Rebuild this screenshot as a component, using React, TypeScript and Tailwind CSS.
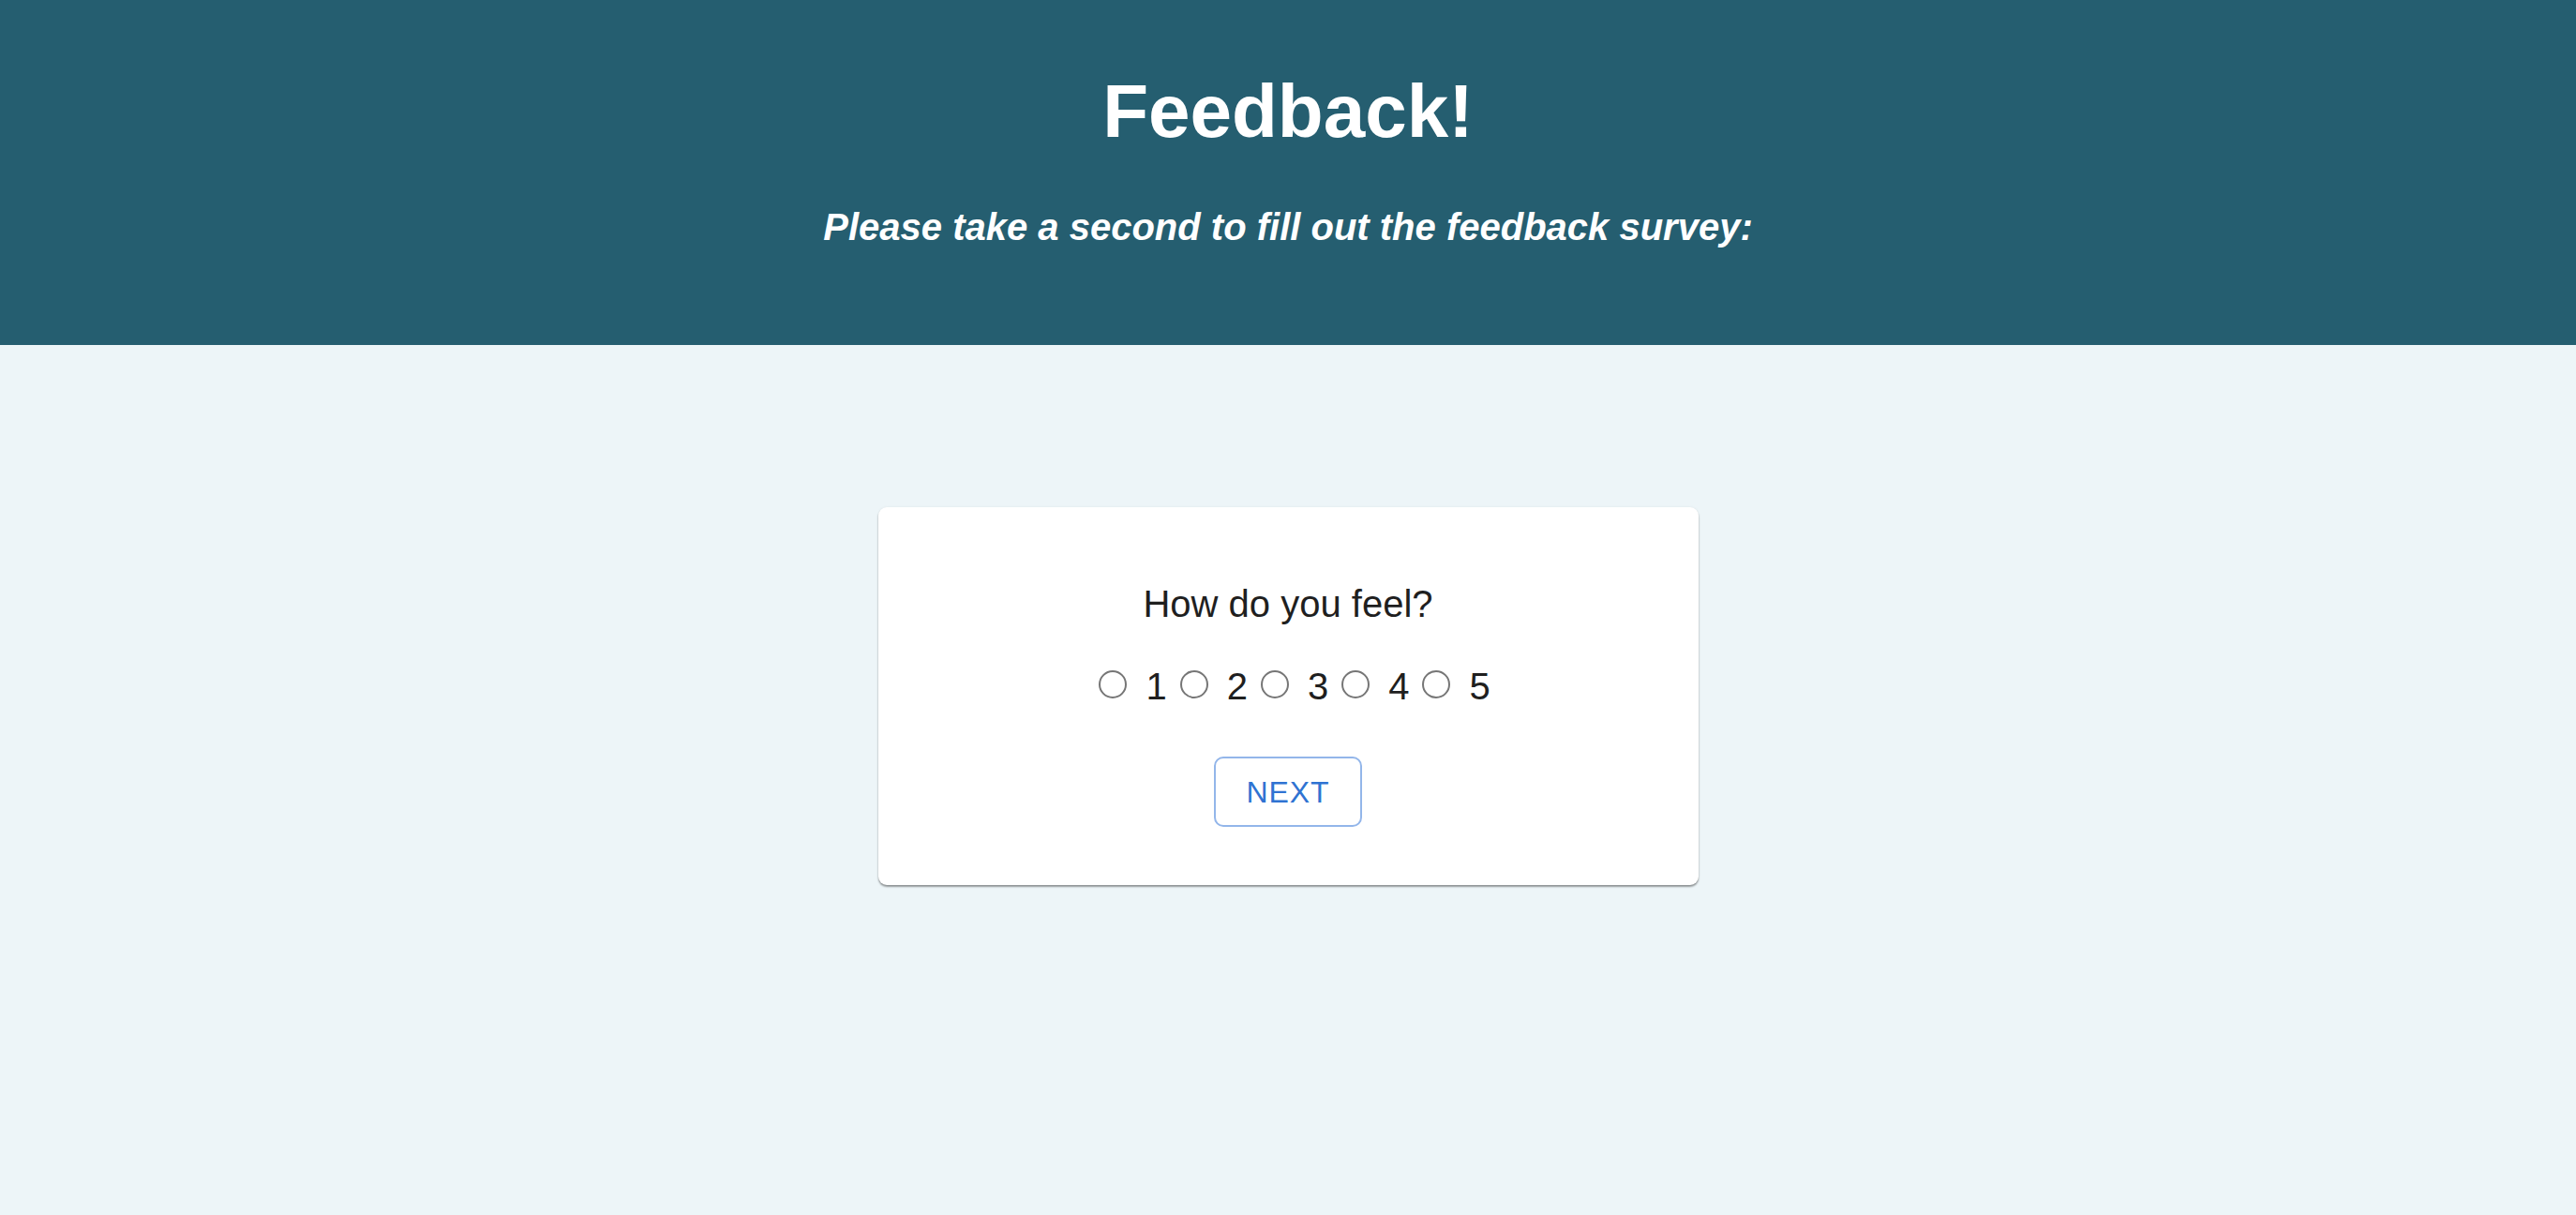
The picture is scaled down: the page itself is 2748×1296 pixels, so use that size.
import React from "react";

export default function App() {
  const font = { fontFamily: '"Liberation Sans", Arial, Helvetica, sans-serif' };
  return (
    <div className="h-[1296px] overflow-hidden w-full bg-[#edf5f8] flex flex-col" style={font}>
      <header className="h-[368px] shrink-0 bg-[#255e70] flex flex-col items-center pt-[79px]">
        <h1 className="text-[80px] leading-none font-bold text-white">Feedback!</h1>
        <p className="mt-[63px] text-[40px] leading-none font-bold italic text-white">
          Please take a second to fill out the feedback survey:
        </p>
      </header>
      <main className="flex justify-center pt-[173px]">
        <div className="w-[875px] h-[403px] bg-white rounded-[9px] shadow-[0_2px_2px_rgba(0,0,0,0.38),0_0_3px_rgba(0,0,0,0.06)] flex flex-col items-center pt-[83px]">
          <div className="text-[40px] leading-none text-[#1f1f1f]">How do you feel?</div>
          <div className="mt-[48px] flex items-center text-[40px] leading-none text-[#1f1f1f]">
            {[1, 2, 3, 4, 5].map((n) => (
              <label key={n} className="flex items-center">
                <span className="ml-[14px] mb-[5px] w-[30px] h-[30px] rounded-full border-2 border-[#767676] bg-white" />
                <span className="ml-[20px]">{n}</span>
              </label>
            ))}
          </div>
          <button className="mt-[55px] w-[158px] h-[75px] flex items-center justify-center rounded-[10px] border-2 border-[#93b6ea] bg-white text-[32px] tracking-[0.9px] text-[#2f73d2]">
            NEXT
          </button>
        </div>
      </main>
    </div>
  );
}
